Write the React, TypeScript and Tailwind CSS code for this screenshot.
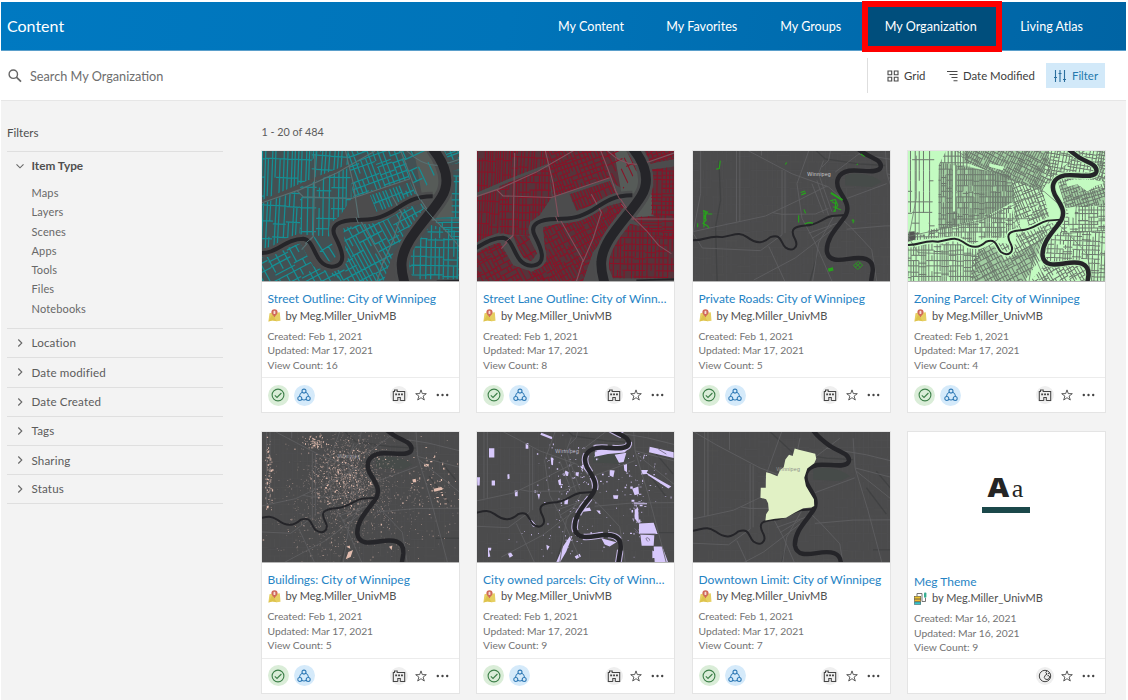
import React from "react";

/* ---------- deterministic helpers for the thumbnails ---------- */
function rng(seed: number) {
  let s = seed;
  return () => {
    s = (s * 1664525 + 1013904223) % 4294967296;
    return s / 4294967296;
  };
}

function streets(seed: number, x0: number, y0: number, x1: number, y1: number, sx: number, sy: number, gap = 0.1) {
  const r = rng(seed);
  let d = "";
  for (let x = x0; x < x1; x += sx * (0.7 + r() * 0.6)) {
    for (let y = y0; y < y1; y += sy) {
      if (r() > gap) d += `M${x.toFixed(1)} ${y}v${sy}`;
    }
  }
  for (let y = y0; y < y1; y += sy) {
    for (let x = x0; x < x1; x += sx * 3) {
      if (r() > gap) d += `M${x.toFixed(1)} ${(y + (r() > 0.7 ? r() * 10 : 0)).toFixed(1)}h${sx * 3}`;
    }
  }
  return d;
}

type Block = { pts: string; rot: number; sx: number; sy: number; cx: number; cy: number; gap?: number };

function Blocks({ id, blocks, color, width, dense = 1 }: { id: string; blocks: Block[]; color: string; width: number; dense?: number }) {
  return (
    <g fill="none" stroke={color} strokeWidth={width}>
      {blocks.map((b, i) => (
        <g key={i} clipPath={`url(#${id}-${i})`}>
          <clipPath id={`${id}-${i}`}>
            <polygon points={b.pts} />
          </clipPath>
          <path
            transform={`rotate(${b.rot} ${b.cx} ${b.cy})`}
            d={streets(i * 97 + 11, b.cx - 330, b.cy - 330, b.cx + 330, b.cy + 330, b.sx * dense, b.sy * dense, b.gap)}
          />
        </g>
      ))}
    </g>
  );
}

const closeBlocks: Block[] = [
  { pts: "30,25 220,25 185,60 185,115 36,180 30,170", rot: 2, sx: 12, sy: 62, cx: 110, cy: 100 },
  { pts: "185,25 290,25 300,70 185,115", rot: 4, sx: 15, sy: 46, cx: 240, cy: 80 },
  { pts: "30,192 150,150 150,280 100,300 60,325 30,325", rot: 3, sx: 14, sy: 52, cx: 90, cy: 240 },
  { pts: "150,140 300,80 305,175 270,228 240,250 240,290 150,285", rot: 1, sx: 16, sy: 34, cx: 220, cy: 190 },
  { pts: "292,30 460,30 480,115 310,172", rot: -20, sx: 17, sy: 21, cx: 390, cy: 100 },
  { pts: "360,165 480,125 500,165 440,195 380,215", rot: -22, sx: 13, sy: 45, cx: 430, cy: 165 },
  { pts: "455,30 560,30 575,75 520,150 490,130", rot: -25, sx: 30, sy: 40, cx: 500, cy: 80, gap: 0.5 },
  { pts: "280,265 410,235 460,205 515,190 530,220 430,340 400,428 290,428 240,405 290,370", rot: -28, sx: 14, sy: 28, cx: 390, cy: 300 },
  { pts: "30,350 110,325 150,310 190,380 260,405 300,428 30,428", rot: -28, sx: 24, sy: 24, cx: 130, cy: 370 },
  { pts: "190,290 235,290 262,345 245,368 215,355", rot: -32, sx: 18, sy: 60, cx: 225, cy: 325 },
  { pts: "520,250 690,290 690,420 490,420 470,370", rot: 1, sx: 17, sy: 30, cx: 580, cy: 350 },
  { pts: "545,235 690,225 690,300 600,290", rot: 0, sx: 36, sy: 15, cx: 610, cy: 260 },
  { pts: "605,90 690,80 690,230 605,235", rot: 1, sx: 20, sy: 20, cx: 650, cy: 160 },
  { pts: "560,25 690,25 690,55 590,75", rot: -20, sx: 20, sy: 16, cx: 620, cy: 45 },
];

function CloseMap({ id, view, color, roads, width, dense, tint }: { id: string; view: string; color: string; roads: string; width: number; dense?: number; tint: string }) {
  return (
    <svg viewBox={view} preserveAspectRatio="none" className="block h-full w-full">
      <rect x="0" y="0" width="720" height="460" fill="#4c4c4d" />
      <g fill={tint}>
        {closeBlocks.map((b, i) => (
          <polygon key={i} points={b.pts} />
        ))}
      </g>
      <path d="M492 30L560 30L590 90L570 165L515 160ZM600 100L612 230L560 235L548 215Z" fill="#565b58" />
      <Blocks id={id} blocks={closeBlocks} color={color} width={width} dense={dense} />
      <g fill="none" stroke="#4c4d4e" strokeLinejoin="round">
        <path strokeWidth="27" d="M30 340C80 344 105 297 160 297C198 302 190 378 245 382C300 378 270 320 255 290C238 255 270 240 320 240C370 240 390 235 430 212C470 185 495 168 548 168" />
        <path strokeWidth="46" d="M548 20C590 80 600 130 575 170C540 230 460 300 455 370C453 400 460 415 462 440" />
      </g>
      <g fill="none" stroke={roads} strokeWidth="3.4">
        <path d="M30 190L150 148L260 98L375 31M285 25L310 130L325 230L400 365L380 430M305 175L480 115M450 25L475 90L500 160L545 230L590 275L627 320L665 345M425 165L455 220L430 300L400 370M470 30C500 60 530 75 560 74L600 66L680 38M140 150L160 170L305 175M545 240L690 240M155 330L190 290L195 40" />
      </g>
      <g fill="none" stroke="#252529">
        <path strokeWidth="12" d="M30 340C80 344 105 297 160 297C198 302 190 378 245 382C300 378 270 320 255 290C238 255 270 240 320 240C370 240 390 235 430 212C470 185 495 168 548 168" />
        <path strokeWidth="29" d="M545 20C590 75 602 125 575 170C540 230 458 300 455 370C453 400 460 415 466 440" />
        <path strokeWidth="5" d="M560 426L690 422" />
      </g>
      <g fill="none" stroke={roads} strokeWidth="3">
        <path d="M495 150L510 180M515 195L552 238M165 312L190 290M318 232L325 250" />
      </g>
    </svg>
  );
}

const mainRiver =
  "M478 -16C492 5 512 20 530 33C552 50 592 56 587 80C580 103 525 86 492 91C455 98 450 125 462 150C480 180 495 200 482 225C465 255 422 290 425 335C430 366 460 363 490 358C532 351 566 354 563 395L555 445";
const smallRiver =
  "M10 301C60 306 60 285 110 292C150 285 160 275 185 292C215 315 235 310 255 292C290 280 285 310 300 323C320 338 341 325 330 300C310 265 330 260 360 257C400 255 410 235 440 228L480 225";
const wideRoads =
  "M10 278L240 228L340 180L425 137M153 -10V245M163 -10V245M290 88V285M299 92V280M120 -10L190 31L320 100L430 140L470 175M385 -10L335 130L350 235L390 310L440 425M485 175L605 130M485 268L600 258L740 257M465 232L500 265L560 330L575 425L578 450M205 422L330 355L440 270M45 31V160L22 280L50 325L225 333L290 285M250 320L305 440M380 130L415 220M395 120L430 225M415 60L400 100L440 215M600 10L606 100L645 230L690 400L700 440M560 10L450 95M440 10L430 60L410 80M370 280L470 245M380 296L440 258M380 440L400 310L445 230M262 218L290 223L390 222L430 205M606 100L740 135M610 110L740 215M520 40L640 60L740 85M228 -10V45";

function BaseMap({ view, ground = "#4b4b4c", road = "#606062", children, over }: { view: string; ground?: string; road?: string; children?: React.ReactNode; over?: React.ReactNode }) {
  return (
    <svg viewBox={view} preserveAspectRatio="none" className="block h-full w-full">
      <rect x="0" y="-40" width="800" height="540" fill={ground} />
      {ground === "#4b4b4c" && (
        <g>
          <path d={streets(5, 0, -40, 760, 480, 13, 26, 0.3)} stroke="#515152" strokeWidth="1.5" fill="none" />
          <path d="M480 105C510 95 560 100 590 125L560 140L480 135Z" fill="#464b49" />
          <path d="M100 60L105 180L90 260L95 440M350 -10L420 55L520 70L600 75M640 160L700 240M670 110L720 170M660 348H740M370 440L395 350" stroke="#414243" strokeWidth="4" fill="none" />
        </g>
      )}
      {children}
      <path d={wideRoads} fill="none" stroke={road} strokeWidth="2.5" />
      <path d={smallRiver} fill="none" stroke="#252529" strokeWidth="6" />
      <path d={mainRiver} fill="none" stroke="#252529" strokeWidth="13.5" />
      {over}
    </svg>
  );
}

const zoneBlocks: Block[] = [
  { pts: "15,10 115,10 100,50 100,270 15,285", rot: 0, sx: 20, sy: 38, cx: 60, cy: 150, gap: 0.25 },
  { pts: "112,50 330,90 340,170 240,222 112,255", rot: 0, sx: 6.5, sy: 20, cx: 220, cy: 150 },
  { pts: "110,10 200,10 205,70 150,55 112,55", rot: 0, sx: 12, sy: 24, cx: 180, cy: 40 },
  { pts: "190,12 440,10 455,90 425,135 320,100 190,50", rot: 27, sx: 8, sy: 14, cx: 330, cy: 60 },
  { pts: "440,10 620,10 620,60 580,90 470,90 440,120", rot: 10, sx: 11, sy: 12, cx: 500, cy: 50 },
  { pts: "330,100 425,135 445,215 400,240 345,250 335,170", rot: -22, sx: 10, sy: 16, cx: 390, cy: 190 },
  { pts: "15,270 230,225 330,180 345,250 310,280 250,280 215,300 170,275 110,280 15,290", rot: 0, sx: 8, sy: 17, cx: 200, cy: 250 },
  { pts: "15,305 100,295 160,288 200,312 240,315 210,425 15,425", rot: 0, sx: 9, sy: 19, cx: 110, cy: 360 },
  { pts: "235,315 285,295 345,300 345,260 460,235 425,340 370,425 205,425 215,340", rot: -28, sx: 10, sy: 18, cx: 310, cy: 360 },
  { pts: "475,125 470,100 560,100 625,90 625,180 495,190", rot: -18, sx: 9, sy: 12, cx: 550, cy: 150 },
  { pts: "495,190 625,175 625,260 480,265", rot: 0, sx: 12, sy: 13, cx: 560, cy: 220 },
  { pts: "435,290 480,262 625,260 625,425 575,425 560,345 435,360", rot: 2, sx: 11, sy: 16, cx: 540, cy: 310 },
  { pts: "430,360 560,360 560,425 370,425", rot: -30, sx: 11, sy: 14, cx: 470, cy: 400 },
  { pts: "585,55 625,50 625,115 585,110", rot: 20, sx: 12, sy: 16, cx: 600, cy: 60 },
];

function dots(seed: number, n: number, cx: number, cy: number, rx: number, ry: number, s: number) {
  const r = rng(seed);
  let d = "";
  for (let i = 0; i < n; i++) {
    const x = cx + (r() + r() - 1) * rx;
    const y = cy + (r() + r() - 1) * ry;
    const w = 1.5 + r() * r() * s;
    const h = 1.5 + r() * r() * s;
    d += `M${x.toFixed(1)} ${y.toFixed(1)}h${w.toFixed(1)}v${h.toFixed(1)}h-${w.toFixed(1)}z`;
  }
  return d;
}

const StreetOutline = () => <CloseMap id="so" view="36 31 591 394" color="#158f94" roads="#587173" width={3.8} dense={0.92} tint="#435053" />;
const StreetLane = () => <CloseMap id="sl" view="82 34 591 394" color="#8a1227" roads="#83505c" width={3.2} dense={0.66} tint="#56343b" />;

const PlaceName = ({ x, y, color = "#c9c9ca" }: { x: number; y: number; color?: string }) => (
  <text x={x} y={y} fill={color} fontSize="16" letterSpacing="0.6" fontFamily="Liberation Sans, sans-serif">Winnipeg</text>
);

const PrivateRoads = () => (
  <BaseMap
    view="22 31 593 394"
    over={
      <g>
        <PlaceName x={366} y={108} />
        <g fill="none" stroke="#27a31c" strokeWidth="3.5">
          <path d="M104 60L101 84L92 86M52 212L66 216L55 232L62 240L52 250L66 258L70 265M66 222H80M36 250V262M55 210V262M60 212V238M300 72L304 66M527 40L539 48M346 157L360 152M348 164L362 158M356 208L361 220M340 226V248M358 252C370 247 376 246 383 250M435 182L450 178L458 195L445 216M444 200L468 210M452 180L450 215M440 185L450 190M500 240L508 244M504 238V250M515 73L518 70" />
          <path strokeWidth="6" d="M437 158L472 180" />
          <path strokeWidth="10" d="M429 392L444 388" />
          <path strokeWidth="2.5" d="M505 378L520 366L533 377L518 390ZM512 372L526 384M510 384L526 370" />
        </g>
      </g>
    }
  />
);

const Zoning = () => (
  <BaseMap view="20 17 593 394" ground="#c3fbc1" road="#6f7d70">
    <path d="M112 50L190 60L330 95L340 170L240 222L112 255ZM190 12L440 10L425 135L320 100L190 50ZM205 425L235 320L285 300L310 345L345 330L430 280L370 425ZM475 125L500 105L570 145L625 130V180L495 190Z" fill="#a1cda1" />
    <Blocks id="zo" blocks={zoneBlocks} color="#6c786d" width={3} dense={0.84} />
    <g fill="#c3fbc1">
      <path d="M100 15L135 15L112 60L105 230L92 230ZM55 205L82 205L82 270L55 270ZM155 60L165 60L165 200L155 200ZM265 55L310 65L305 75L265 65ZM355 225L378 218L382 245L358 250ZM425 140L470 160L485 230L455 215ZM495 110C520 100 570 100 620 112L585 122L560 140L530 118L500 125ZM498 190L525 185L520 220L505 215ZM415 350L425 370L385 415L375 405ZM495 255L505 240L510 275Z" />
    </g>
    <path d={mainRiver} fill="none" stroke="#b9efb7" strokeWidth="19" />
    <path d={smallRiver} fill="none" stroke="#c3fbc1" strokeWidth="15" />
    <path d="M22 262L40 260L42 285L20 292Z" fill="#555" />
  </BaseMap>
);

const Buildings = () => (
  <BaseMap view="139 26 591 394">
    <g fill="#8e817d">
      <path d={dots(3, 900, 400, 160, 150, 150, 3)} />
      <path d={dots(9, 700, 440, 220, 310, 210, 3)} />
      <path d={dots(14, 160, 330, 330, 140, 100, 3)} />
    </g>
    <g fill="#e3bdae">
      <path d={dots(21, 300, 385, 155, 110, 110, 5)} />
      <path d={dots(31, 60, 295, 55, 45, 22, 6)} />
      <path d={dots(44, 90, 157, 150, 14, 125, 7)} />
      <path d={dots(57, 130, 440, 220, 320, 220, 5)} />
      <path d={dots(62, 60, 660, 180, 90, 120, 7)} />
      <path d="M654 198L678 193L680 201L656 207ZM590 170L600 168L602 178L592 178ZM398 390L412 384L405 405L390 412ZM392 374L402 370L404 380ZM520 374L530 370L528 384ZM625 122L640 124L638 132L625 130Z" />
    </g>
    <text x="368" y="106" fill="#a3a3aa" fontSize="14" letterSpacing="1" fontFamily="Liberation Sans, sans-serif">Winnipeg</text>
  </BaseMap>
);

const OwnedParcels = () => (
  <BaseMap view="132 43 591 394" over={<PlaceName x={367} y={107} color="#b9b6c6" />}>
    <path d={mainRiver} fill="none" stroke="#bfb2dd" strokeWidth="20" strokeDasharray="60 14 40 30" />
    <g fill="#d7c8fb">
      <path d="M168 92L184 92L184 120L168 120ZM176 190L186 190L186 205L176 205ZM245 220L254 220L254 238L246 238ZM278 78L286 76L286 94L278 94ZM353 120L361 122L360 144L355 142ZM325 45L358 58L356 65L322 51ZM485 105L500 96L580 96L590 88L575 105L525 110L486 118ZM545 112L580 106L572 134L558 136ZM650 88L722 104L722 122L648 104ZM624 158L645 158L640 170L624 172ZM640 166L715 208L706 214L645 174ZM530 158L545 160L541 180L530 175ZM572 140L582 140L582 165L574 160ZM592 200L598 215L616 208L618 230L605 235ZM602 255L642 258L642 262L602 262ZM605 280L615 270L618 320L605 305ZM618 320L662 318L674 352L618 352ZM622 354L664 356L662 388L626 388ZM662 390L688 390L705 437L665 437ZM658 402L674 410L674 422L658 426ZM455 275L470 272L475 282L450 285ZM410 360L418 358L400 405L382 436L370 437L390 390ZM165 394L175 394L174 402L168 402L172 420L165 422ZM224 410L234 408L240 418L230 424ZM425 420L440 412L444 420L430 428ZM505 365L550 377L530 390L515 384ZM390 175L398 160L407 165L405 176ZM375 190L383 185L385 205L378 204ZM442 145L452 150L448 165ZM468 160L478 170L470 180ZM395 245L406 245L404 262L394 262ZM287 308L296 310L312 328L300 330ZM540 235L556 235L554 246L542 245ZM490 280L502 282L500 292ZM223 172L229 170L230 184L224 186ZM313 230L321 232L318 248ZM132 180L141 180L140 205L133 205ZM340 385L350 390L342 402ZM428 165L438 165L436 177L428 175Z" />
      <path d={dots(71, 90, 410, 180, 130, 140, 5)} />
      <path d={dots(72, 60, 590, 180, 140, 120, 6)} />
      <path d={dots(73, 40, 610, 270, 24, 90, 10)} />
      <path d={dots(74, 50, 430, 370, 260, 70, 6)} />
    </g>
    <path d="M620 352H668M645 375C630 360 650 360 650 372M605 335L618 350L606 345M676 95L700 110" stroke="#6f687f" strokeWidth="2.5" fill="none" />
  </BaseMap>
);

const Downtown = () => (
  <BaseMap
    view="118 -9 593 394"
    over={
      <g>
        <path d="M424 41L437 45L486 57L489 72L483 86L462 102L453 130L458 155L470 175L482 195L483 215L474 220L450 222L425 235L398 251L365 254L336 259L338 240L346 228L344 207L338 195L321 190L322 160L337 160L338 113L350 116L372 125L380 106L391 98L396 74L407 60L418 64Z" fill="#e1f1c5" />
        <PlaceName x={369} y={108} color="#8e8e88" />
      </g>
    }
  />
);

/* ---------- icons ---------- */
const SearchIcon = () => (
  <svg className="h-[14px] w-[14px]" viewBox="0 0 14 14" fill="none" stroke="#666" strokeWidth="1.4">
    <circle cx="5.3" cy="5.2" r="4.2" />
    <path d="M8.4 8.2L13 12.7" strokeWidth="1.7" />
  </svg>
);
const GridIcon = () => (
  <svg className="h-3 w-3" viewBox="0 0 12 12" fill="none" stroke="#4a4a4a" strokeWidth="1.1">
    <path d="M1 1h3.7v3.7H1zM7.3 1H11v3.7H7.3zM1 7.3h3.7V11H1zM7.3 7.3H11V11H7.3z" />
  </svg>
);
const SortIcon = () => (
  <svg className="h-3 w-3" viewBox="0 0 12 12" fill="none" stroke="#4a4a4a" strokeWidth="1.1">
    <path d="M0 1.5h10.5M2.5 4.5h8M4.5 7.5h6M6.5 10.7h4" />
  </svg>
);
const FilterIcon = () => (
  <svg className="h-[14px] w-[14px]" viewBox="0 0 14 14" fill="none" stroke="#2b6f9e" strokeWidth="1.1">
    <path d="M2.5 1v12M7 1v12M11.5 1v12M1 8.5h3M5.5 4.5h3M10 10.5h3" />
  </svg>
);
const Chevron = ({ open }: { open?: boolean }) => (
  <svg className="h-2 w-2 shrink-0" viewBox="0 0 8 8" fill="none" stroke="#666" strokeWidth="1.1">
    <path d={open ? "M0.5 2.3L4 5.8L7.5 2.3" : "M2.3 0.5L5.8 4L2.3 7.5"} />
  </svg>
);
const MapItemIcon = () => (
  <svg className="h-[13px] w-[13px] shrink-0" viewBox="0 0 13 13">
    <path d="M1.5 4.2L4.5 3.4L8.5 3.8L11.8 3.2L12.5 11.7L8.7 12.3L4.5 11.5L0.4 12.4Z" fill="#e6cf62" />
    <path d="M4.5 5L0.4 12.4L4.5 11.5L8.7 12.3L6 8Z" fill="#d9bb3e" opacity=".6" />
    <path d="M6.5 0.3C4.3 0.3 3.4 1.6 3.4 3.3C3.4 5.4 5.3 6 6.5 8.4C7.7 6 9.6 5.4 9.6 3.3C9.6 1.6 8.6 0.3 6.5 0.3Z" fill="#d0695a" />
    <rect x="5.5" y="1.8" width="1.9" height="3.3" rx=".9" fill="#f5ddd5" />
  </svg>
);
const ThemeItemIcon = () => (
  <svg className="h-[13px] w-[13px] shrink-0" viewBox="0 0 13 13">
    <path d="M3 4V1.5H8V9.5H11.5V6" fill="none" stroke="#666" strokeWidth=".9" />
    <rect x=".5" y="4.3" width="6.2" height="2.6" fill="#eec52f" stroke="#675b35" strokeWidth=".6" />
    <rect x=".5" y="7.2" width="6.2" height="2.4" fill="#f2b92f" stroke="#675b35" strokeWidth=".6" />
    <rect x=".5" y="10" width="6.2" height="2.4" fill="#35c5cd" stroke="#3c6567" strokeWidth=".6" />
    <rect x="10" y=".5" width="2.4" height="5.2" rx="1" fill="#35ac90" />
  </svg>
);
const CheckIcon = () => (
  <svg className="h-[14px] w-[14px]" viewBox="0 0 14 14" fill="none" stroke="#3c7f48" strokeWidth="1.1">
    <circle cx="7" cy="7" r="5.9" />
    <path d="M3.8 7.4L6 9.5L10.4 5" />
  </svg>
);
const GroupIcon = () => (
  <svg className="h-[14px] w-[14px]" viewBox="0 0 14 14" fill="none" stroke="#2f79b5" strokeWidth="1.05">
    <circle cx="7" cy="3.1" r="2" />
    <circle cx="2.8" cy="10.4" r="2" />
    <circle cx="11.2" cy="10.4" r="2" />
    <path d="M5.2 4.1C3.5 5 2.6 6.5 2.5 8.3M8.8 4.1C10.5 5 11.4 6.5 11.5 8.3M4.7 11.3C6.2 12.1 7.8 12.1 9.3 11.3" />
  </svg>
);
const OrgIcon = () => (
  <svg className="h-[14px] w-[14px]" viewBox="0 0 14 14" fill="none" stroke="#444" strokeWidth="1.05">
    <path d="M5.8 12.4H1.3V3.5H2.5V2H5.2V3.5H12.7V12.4H8.3M5.8 12.6V9.5H8.3V12.6" />
    <path d="M3.2 6.4h1.9M6.1 6.4H8M9 6.4h1.9" strokeWidth="1.7" />
  </svg>
);
const GlobeIcon = () => (
  <svg className="h-[14px] w-[14px]" viewBox="0 0 14 14" fill="none" stroke="#444" strokeWidth="1">
    <circle cx="7" cy="7" r="5.7" />
    <path d="M8.8 1.8L7.8 3.6L9 5.1L7 6.5L6.3 8.5L7.6 10.4H10.2L11.9 7.8L10 6.3L9.3 7.2M11.6 4.2L9.8 4.8" />
  </svg>
);
const StarIcon = () => (
  <svg className="h-3 w-3" viewBox="0 0 12 12" fill="none" stroke="#4a4a4a" strokeWidth=".9">
    <path d="M6 .9L7.3 4.6L11.3 4.7L8.1 7.1L9.3 11L6 8.7L2.7 11L3.9 7.1L.7 4.7L4.7 4.6Z" />
  </svg>
);
const MoreIcon = () => (
  <svg className="h-3 w-[13px]" viewBox="0 0 13 12" fill="#444">
    <circle cx="1.8" cy="6" r="1.2" />
    <circle cx="6.5" cy="6" r="1.2" />
    <circle cx="11.2" cy="6" r="1.2" />
  </svg>
);

/* ---------- content ---------- */
type Item = { title: string; views: number; art?: () => React.ReactElement; created?: string; updated?: string };
const items: Item[] = [
  { title: "Street Outline: City of Winnipeg", views: 16, art: StreetOutline },
  { title: "Street Lane Outline: City of Winn…", views: 8, art: StreetLane },
  { title: "Private Roads: City of Winnipeg", views: 5, art: PrivateRoads },
  { title: "Zoning Parcel: City of Winnipeg", views: 4, art: Zoning },
  { title: "Buildings: City of Winnipeg", views: 5, art: Buildings },
  { title: "City owned parcels: City of Winn…", views: 9, art: OwnedParcels },
  { title: "Downtown Limit: City of Winnipeg", views: 7, art: Downtown },
  { title: "Meg Theme", views: 9, created: "Mar 16, 2021", updated: "Mar 16, 2021" },
];

function Card({ item }: { item: Item }) {
  const Art = item.art;
  return (
    <article className="flex h-[263px] w-[199px] flex-col border border-[#e4e4e4] bg-white">
      {Art ? (
        <div className="h-[131px] border-b border-[#b5b5b5]">
          <Art />
        </div>
      ) : (
        <div className="flex h-[133px] flex-col items-center pt-[41px] pr-px">
          <div className="flex h-[28px] items-baseline justify-center gap-1 leading-7 text-[#252525]">
            <span className="inline-block scale-x-115 font-['Open_Sans',sans-serif] text-[26px] font-extrabold">A</span>
            <span className="font-['Liberation_Serif',serif] text-[26px]">a</span>
          </div>
          <div className="mt-[6px] h-[6px] w-[48px] bg-[#1b484a]" />
        </div>
      )}
      <div className="flex flex-col px-[6px] pt-[8px]">
        <h3 className="h-[17.5px] text-[12px] leading-[17px] whitespace-nowrap text-[#2583c4]">{item.title}</h3>
        <p className="flex h-4 items-center gap-[5px] text-[11px] leading-4 whitespace-nowrap text-[#4f4f4f]">
          {Art ? <MapItemIcon /> : <ThemeItemIcon />}
          by Meg.Miller_UnivMB
        </p>
        <div className="mt-[5px] text-[10.3px] leading-[14.7px] text-[#737373]">
          <p>Created: {item.created ?? "Feb 1, 2021"}</p>
          <p>Updated: {item.updated ?? "Mar 17, 2021"}</p>
          <p>View Count: {item.views}</p>
        </div>
      </div>
      <footer className="mt-auto flex h-[35px] items-center border-t border-[#ececec] pr-[10px] pl-[6px]">
        {Art && (
          <div className="flex gap-[5px]">
            <span className="flex h-[21px] w-[21px] items-center justify-center rounded-full bg-[#daedd8]"><CheckIcon /></span>
            <span className="flex h-[21px] w-[21px] items-center justify-center rounded-full bg-[#d5eafa]"><GroupIcon /></span>
          </div>
        )}
        <div className="ml-auto flex items-center">
          <span className="mr-[7px] flex h-[18px] w-[18px] items-center justify-center rounded-full bg-[#efefef]">{Art ? <OrgIcon /> : <GlobeIcon />}</span>
          <span className="mr-[9px]"><StarIcon /></span>
          <MoreIcon />
        </div>
      </footer>
    </article>
  );
}

const types = ["Maps", "Layers", "Scenes", "Apps", "Tools", "Files", "Notebooks"];
const groups = ["Location", "Date modified", "Date Created", "Tags", "Sharing", "Status"];

export default function App() {
  return (
    <div className="h-[700px] w-[1128px] overflow-hidden bg-white pt-[2px] pr-[2px] pl-px font-[Lato,sans-serif]">
      <header className="flex h-[49px] items-center justify-between border-b border-[#5a9fcb] bg-[linear-gradient(100deg,#0079c1_0%,#0074b9_45%,#0064a4_100%)] pr-[21.5px] pl-[6px] text-white">
        <h1 className="text-[16px] leading-6">Content</h1>
        <nav className="flex h-full items-stretch text-center text-[12.6px] leading-[49px] whitespace-nowrap">
          <a className="w-[108px]">My Content</a>
          <a className="w-[113.5px]">My Favorites</a>
          <a className="w-[104.5px]">My Groups</a>
          <a className="relative w-[135.5px] bg-[#004e7c]">
            My Organization
            <span className="absolute -top-px -left-px h-[51px] w-[140px] border-[6px] border-[#fe0000]" />
          </a>
          <a className="w-[106px]">Living Atlas</a>
        </nav>
      </header>

      <section className="flex h-[49px] items-center bg-white pr-[21px] pl-[7px]">
        <SearchIcon />
        <span className="ml-2 text-[12.7px] leading-5 text-[#6e6e6e]">Search My Organization</span>
        <div className="ml-auto flex items-center text-[11.4px] leading-5 text-[#3d3d3d]">
          <span className="mr-[19px] h-[35px] w-px bg-[#dedede]" />
          <GridIcon />
          <span className="ml-[5px] w-[43px]">Grid</span>
          <SortIcon />
          <span className="ml-1 w-[83px] whitespace-nowrap">Date Modified</span>
          <span className="flex h-[25px] w-[59px] items-center justify-center gap-[5px] bg-[#d2e9f9] text-[#2579ad]">
            <FilterIcon />
            Filter
          </span>
        </div>
      </section>

      <main className="flex h-[600px] border-t border-[#e6e6e6] bg-[#f3f3f3] pl-[6px]">
        <aside className="mr-[37.5px] w-[216px] pt-[24px] text-[#4f4f4f]">
          <h2 className="h-[26px] text-[11.6px] leading-4">Filters</h2>
          <div className="h-[177px] border-t border-[#dfdfdf] pt-[5px]">
            <div className="flex h-[17px] items-center gap-2 pl-[8.5px] text-[11.8px] font-bold">
              <Chevron open />
              Item Type
            </div>
            <ul className="pt-[9px] pl-[24.5px] text-[11px] leading-[19.3px] tracking-[0.15px] text-[#686868]">
              {types.map((t) => (
                <li key={t}>{t}</li>
              ))}
            </ul>
          </div>
          {groups.map((g) => (
            <div key={g} className="flex h-[29.3px] items-center gap-2 border-t border-[#dfdfdf] pl-[8.5px] text-[11.6px] tracking-[0.15px] text-[#5c5c5c] last:border-b">
              <Chevron />
              {g}
            </div>
          ))}
        </aside>
        <div className="pt-[23px]">
          <p className="h-[26px] pl-px text-[10.8px] leading-4 text-[#5c5c5c]">1 - 20 of 484</p>
          <div className="grid grid-cols-[repeat(4,199px)] gap-x-[16.5px] gap-y-[17.5px]">
            {items.map((i) => (
              <Card key={i.title} item={i} />
            ))}
          </div>
        </div>
      </main>
    </div>
  );
}
